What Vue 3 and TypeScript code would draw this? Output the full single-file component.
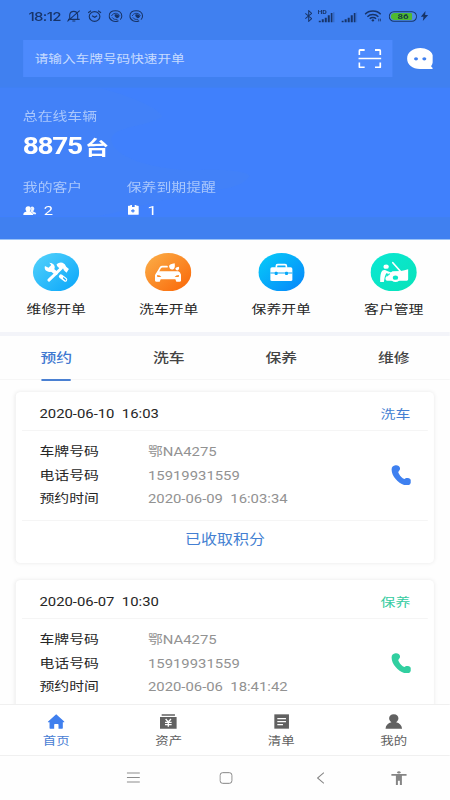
<script setup lang="ts">
interface Booking {
  created: string
  kind: string
  tone: 'blue' | 'green'
  plate: string
  phone: string
  time: string
  footer?: string
}

const shortcuts = [
  { id: 'repair', label: '维修开单' },
  { id: 'wash', label: '洗车开单' },
  { id: 'care', label: '保养开单' },
  { id: 'client', label: '客户管理' },
]

const tabs = ['预约', '洗车', '保养', '维修']

const bookings: Booking[] = [
  {
    created: '2020-06-10  16:03', kind: '洗车', tone: 'blue', plate: '鄂NA4275',
    phone: '15919931559', time: '2020-06-09  16:03:34', footer: '已收取积分',
  },
  {
    created: '2020-06-07  10:30', kind: '保养', tone: 'green', plate: '鄂NA4275',
    phone: '15919931559', time: '2020-06-06  18:41:42',
  },
]

const navItems = [
  { id: 'home', label: '首页' },
  { id: 'asset', label: '资产' },
  { id: 'orders', label: '清单' },
  { id: 'mine', label: '我的' },
]
</script>

<template>
  <div class="screen">
    <header class="hero">
      <svg class="hero-art" viewBox="0 0 450 240" preserveAspectRatio="none" aria-hidden="true">
        <rect y="88" width="450" height="130" fill="#4080fc" />
        <path d="M0 88H98C130 96 158 108 162 117C150 127 113 126 111 140C113 158 150 169 190 171C230 169 248 173 249 177C242 187 225 191 205 191C160 199 130 212 97 217H0Z" fill="#4381f7" opacity=".75" />
      </svg>
      <div class="status">
        <span class="clock">18:12</span>
        <div class="status-left">
          <svg width="11.2" height="12" viewBox="0 0 41 36" preserveAspectRatio="none" fill="none" stroke="#173469" stroke-width="3.4">
            <path d="M8 27V15C9 7 15 4 20 4s11 3 12 11v12M3 28h35M16 33h9M1 34L38 2" />
          </svg>
          <svg width="11.2" height="12" viewBox="0 0 41 36" preserveAspectRatio="none" fill="none" stroke="#173469" stroke-width="3.4">
            <ellipse cx="20.500" cy="19.500" rx="16" ry="14.500" /><path d="M1 8l9-6M40 8l-9-6M13 17l8 5 7-5" />
          </svg>
          <svg v-for="n in 2" :key="n" width="11.5" height="12" viewBox="0 0 42 36" preserveAspectRatio="none" fill="none" stroke="#173469" stroke-width="3.2">
            <path d="M30 32C18 38 2 31 2 18S12 2 21 2s19 5 19 16c0 5-2 9-5 11" />
            <path d="M9 18c4-9 17-12 25-1M11 22c3 6 9 7 16 6" stroke-width="2.600" /><path d="M18 14c5-3 12-1 15 5l-4 5c-6 0-11-3-11-10z" fill="#173469" stroke="none" />
          </svg>
        </div>
        <div class="status-right">
          <svg width="6.600" height="12" viewBox="0 0 24 36" preserveAspectRatio="none" fill="none" stroke="#173469" stroke-width="3">
            <path d="M2 10l19 16-9 8V2l9 8L2 26" />
          </svg>
          <svg class="g1" width="13.700" height="13" viewBox="0 0 50 39" preserveAspectRatio="none" fill="#173469">
            <text x="-2" y="13" font-size="17" font-weight="700" textLength="28" lengthAdjust="spacingAndGlyphs">HD</text>
            <path d="M2 32h6v5H2zM11 28h6v9h-6zM20 23h6v14h-6zM29 16h6v21h-6zM38 9h5v28h-5z" /><path d="M45 7h4v30h-4z" opacity=".3" />
          </svg>
          <svg class="g2" width="13.900" height="13" viewBox="0 0 50 39" preserveAspectRatio="none" fill="#173469">
            <path d="M1 32h6v5H1zM10 28h6v9h-6zM19 23h6v14h-6zM28 16h6v21h-6zM37 9h5v28h-5z" /><path d="M45 7h4v30h-4z" opacity=".3" />
          </svg>
          <svg class="g3" width="14.200" height="12" viewBox="0 0 52 36" preserveAspectRatio="none" fill="none" stroke="#173469" stroke-width="4.500">
            <path d="M2 13C14 0 37 0 49 13M9 20c9-9 24-9 33 0M16 26c5-5 14-5 19 0" /><circle cx="25.500" cy="31" r="3.500" fill="#173469" stroke="none" /><path d="M43 26v8m5-8v8" stroke-width="2.500" />
          </svg>
          <svg class="g3" width="23.200" height="11" viewBox="0 0 85 33" preserveAspectRatio="none">
            <rect x="1.500" y="2" width="82" height="29" rx="14" fill="#4c8bea" stroke="#173469" stroke-width="3.200" />
            <path d="M16 6H67a8 8 0 0 1 3 2V25a8 8 0 0 1-3 2H16C3 26 3 7 16 6z" fill="#4fba31" />
            <text x="26" y="25" font-size="24" font-weight="700" fill="#153d42" textLength="34" lengthAdjust="spacingAndGlyphs">86</text>
          </svg>
          <svg class="g4" width="6.600" height="10" viewBox="0 0 24 30" preserveAspectRatio="none" fill="#173469">
            <path d="M15 0L1 17h8L7 30 23 12h-9z" />
          </svg>
        </div>
      </div>

      <div class="search-row">
        <div class="search">
          <span>请输入车牌号码快速开单</span>
          <svg width="18.900" height="19.500" viewBox="0 0 69 58" preserveAspectRatio="none" fill="none" stroke="#fff" stroke-width="5.500">
            <path d="M2.800 18V6q0-3 3-3H19M50 3h13q3 0 3 3v12M2.800 40v12q0 3 3 3H19M50 55h13q3 0 3-3V40" /><path d="M0 28.500h69" stroke-width="4.500" />
          </svg>
        </div>
        <svg class="chat" width="21.800" height="21" viewBox="0 0 80 62" preserveAspectRatio="none">
          <path d="M40 0C18 0 0 13 0 31s16 31 39 31h37q4-2 1-4c-5-2-5-4-3-7 4-6 6-12 6-20C80 13 62 0 40 0z" fill="#fff" /><ellipse cx="27" cy="32" rx="6" ry="5" fill="#4080ef" /><ellipse cx="52" cy="32" rx="6" ry="5" fill="#4080ef" />
        </svg>
      </div>

      <div class="total-label">总在线车辆</div>
      <div class="total"><span class="digits">8875</span><span>台</span></div>
      <div class="stats">
        <div class="stat">
          <div class="stat-label">我的客户</div>
          <div class="stat-value">
            <svg width="10.900" height="9" viewBox="0 0 40 28" preserveAspectRatio="none" fill="#fff">
              <path d="M23 3q5-3 9 1c4 5 0 10-2 13l8 4q2 2 1 5H30l-2-5-7-4c3-4 5-9 2-14z" opacity=".9" /><path d="M15 1c7 0 9 5 8 9-1 3-3 5-3 7l7 4q3 2 3 7H0q0-6 3-8l7-3c0-2-3-4-3-8s3-8 8-8z" />
            </svg>
            <span>2</span>
          </div>
        </div>
        <div class="stat">
          <div class="stat-label">保养到期提醒</div>
          <div class="stat-value due">
            <svg width="8.800" height="9.800" viewBox="0 0 32 30" preserveAspectRatio="none">
              <path d="M2 2h5V0h5v3h8V0h5v2h5q2 0 2 2v24q0 2-2 2H2q-2 0-2-2V4q0-2 2-2z" fill="#fff" /><path d="M12 3h8v3h-8zM9 16h4v-3h4v3h3v4h-3v3h-4v-3H9z" fill="#4080f5" />
            </svg>
            <span>1</span>
          </div>
        </div>
      </div>
    </header>

    <section class="shortcuts">
      <div v-for="s in shortcuts" :key="s.id" class="shortcut">
        <svg width="38" height="38.400" viewBox="0 0 139 115" preserveAspectRatio="none">
          <defs>
            <linearGradient id="g-repair" x1="0" y1="0" x2="1" y2="1"><stop stop-color="#55d3fb" /><stop offset="1" stop-color="#08a5fa" /></linearGradient>
            <linearGradient id="g-wash" x1="0" y1="0" x2="1" y2="1"><stop stop-color="#fbb04a" /><stop offset="1" stop-color="#fa6506" /></linearGradient>
            <linearGradient id="g-care" x1="0" y1="0" x2="1" y2="1"><stop stop-color="#06cdf8" /><stop offset="1" stop-color="#0784fb" /></linearGradient>
            <linearGradient id="g-client" x1="0" y1="0" x2="1" y2="1"><stop stop-color="#0ae8d4" /><stop offset="1" stop-color="#08e3b9" /></linearGradient>
          </defs>
          <ellipse cx="69.500" cy="57.500" rx="69.500" ry="57.500" :fill="`url(#g-${s.id})`" />
          <g v-if="s.id === 'repair'" fill="none" stroke="#fff">
            <path d="M57 50L69 60M84 70L97 80" stroke-width="12" stroke-linecap="round" />
            <path d="M49 29l6 7-8 8-11-5q-3 11 7 16 9 4 18-2 8-9 2-18-5-6-14-6z" fill="#fff" stroke="none" />
            <path d="M86 45L48 81" stroke-width="9" stroke-linecap="round" />
            <path d="M71 34q8-8 18-5 8 3 11 12l8 7-7 11-8-7-3-7q-5-2-9 2l-8-7z" fill="#fff" stroke="none" />
            <path d="M92 75l6 5" stroke="#18acf9" stroke-width="4" stroke-linecap="round" />
          </g>
          <g v-else-if="s.id === 'wash'">
            <path d="M38 58l8-14q2-3 6-3h14" fill="none" stroke="#fff" stroke-width="5" stroke-linecap="round" />
            <path d="M72 39q2-6 17-8 2 15-4 18-11 3-13-10zM91 46q3-5 11-5 2 9-3 11-8 2-8-6z" fill="#fff" />
            <path d="M39 55h61q6 3 8 10v18q-1 3-4 3H94l-3-7H47l-3 7H34q-3 0-4-3V66q3-8 9-11z" fill="#fff" />
            <path d="M36 66q10 0 13 6H37zM102 66q-10 0-13 6h12z" fill="#fb8b24" />
          </g>
          <g v-else-if="s.id === 'care'">
            <path d="M54 44v-5q0-4 4-4h22q4 0 4 4v5" fill="none" stroke="#fff" stroke-width="5" />
            <path d="M41 43h56q5 0 5 5v33q0 3-5 3H41q-5 0-5-3V48q0-5 5-5z" fill="#fff" />
            <path d="M36 60h66" stroke="#07a9f9" stroke-width="3" /><rect x="49" y="56" width="9" height="10" rx="3" fill="#07a9f9" /><rect x="80" y="56" width="9" height="10" rx="3" fill="#07a9f9" />
          </g>
          <g v-else>
            <ellipse cx="47" cy="41" rx="8" ry="6.500" fill="#fff" />
            <path d="M29 87q-1-25 6-34 7-5 15 1l16 6-1 5-18-4-4 10-3 16z" fill="#fff" />
            <path d="M67 29l22 25" stroke="#fff" stroke-width="5" stroke-linecap="round" />
            <path d="M48 68l18-13 25-1q11-2 22-5v30q0 4-4 4H49q-8-4-1-15z" fill="#fff" />
            <ellipse cx="75" cy="74" rx="15" ry="13" fill="#fff" /><ellipse cx="75" cy="74" rx="8" ry="6.500" fill="#09e6c8" /><path d="M48 70l10-8" stroke="#09e6c8" stroke-width="3" />
          </g>
        </svg>
        <span>{{ s.label }}</span>
      </div>
    </section>

    <nav class="tabs">
      <div v-for="(t, i) in tabs" :key="t" class="tab" :class="{ active: i === 0 }"><span>{{ t }}</span></div>
    </nav>

    <main class="list">
      <article v-for="b in bookings" :key="b.created" class="card" :class="b.tone">
        <div class="card-head"><span>{{ b.created }}</span><span class="kind">{{ b.kind }}</span></div>
        <div class="card-body">
          <dl>
            <dt>车牌号码</dt><dd>{{ b.plate }}</dd>
            <dt>电话号码</dt><dd>{{ b.phone }}</dd>
            <dt>预约时间</dt><dd>{{ b.time }}</dd>
          </dl>
          <svg class="call" width="16.700" height="20.700" viewBox="0 0 62 62" preserveAspectRatio="none">
            <path d="M13 1c6-1 13 2 14 9 0 5-3 8-5 10-1 2 0 4 2 7 4 7 9 12 16 15 3-2 6-4 11-3 7 1 11 6 10 11-1 8-9 12-17 11C24 58 2 35 1 15 0 7 6 2 13 1z" fill="currentColor" />
          </svg>
        </div>
        <div v-if="b.footer" class="card-foot">{{ b.footer }}</div>
      </article>
    </main>

    <nav class="bottom">
      <div v-for="n in navItems" :key="n.id" class="nav-item" :class="n.id">
        <svg width="14.200" height="15" viewBox="0 0 52 45" preserveAspectRatio="none" fill="currentColor">
          <path v-if="n.id === 'home'" d="M26 1l25 22q1 2-1 2h-4v17q0 2-2 2H33V32q0-2-2-2H22q-2 0-2 2v12H8q-2 0-2-2V25H2q-2 0-1-2z" />
          <template v-else-if="n.id === 'asset'">
            <path d="M6 1h40v4H6zM1 9h50v35H1z" /><path d="M18 15l8 9 8-9M16 25h20M16 32h20M26 24v14" fill="none" stroke="#fff" stroke-width="4" />
          </template>
          <template v-else-if="n.id === 'orders'">
            <path d="M4 1h44v43H4z" /><path d="M13 14h26M13 23h26M13 32h17" stroke="#fff" stroke-width="3.500" />
          </template>
          <path v-else d="M26 1c9 0 14 6 14 12 0 5-3 9-7 12 10 2 17 9 18 19H1c1-10 8-17 18-19-4-3-7-7-7-12C12 7 17 1 26 1z" />
        </svg>
        <span>{{ n.label }}</span>
      </div>
    </nav>

    <footer class="system">
      <svg width="10.700" height="11" viewBox="0 0 39 33" preserveAspectRatio="none" fill="none" stroke="#8b8b8b" stroke-width="3"><path d="M0 3h39M0 16.500h39M0 30h39" /></svg>
      <svg class="sys-home" width="10.900" height="12" viewBox="0 0 40 36" preserveAspectRatio="none" fill="none" stroke="#858585" stroke-width="3"><rect x="2" y="2" width="36" height="32" rx="8" /></svg>
      <svg class="sys-back" width="6.300" height="12" viewBox="0 0 23 36" preserveAspectRatio="none" fill="none" stroke="#858585" stroke-width="3"><path d="M21 2L2 18l19 16" /></svg>
      <svg class="sys-access" width="12.600" height="14" viewBox="0 0 46 42" preserveAspectRatio="none" fill="#858585"><ellipse cx="23" cy="4" rx="5" ry="3.500" /><path d="M0 9h46v5H32v28h-6V29h-6v13h-6V14H0z" /></svg>
    </footer>
  </div>
</template>

<style>
body {
  overflow: hidden;
  background: #fff;
}
</style>

<style scoped>
/* The layout is drawn in narrow phone units and widened to fill the window. */
.screen {
  display: flex;
  flex-direction: column;
  width: 369.23px;
  height: 800px;
  transform: scaleX(1.21875);
  transform-origin: 0 0;
  background: #fefefe;
  color: #262626;
  font-family: Roboto, "Noto Sans CJK SC", sans-serif;
  font-size: 12.2px;
}
svg {
  display: block;
  flex: none;
}
.hero {
  position: relative;
  flex: none;
  box-sizing: border-box;
  width: 370px;
  height: 240px;
  background: #4080f0;
  border-bottom: 1px solid #9bc3f7;
  color: #fff;
}
.hero-art {
  position: absolute;
  left: 0;
  top: 0;
  width: 100%;
  height: 100%;
}
.hero > div {
  position: relative;
}
.status {
  display: flex;
  align-items: center;
  height: 32px;
  padding: 0 18.2px 0 23.3px;
  color: #173469;
}
.clock {
  width: 32.2px;
  font-size: 12.3px;
  font-weight: 500;
  letter-spacing: -0.5px;
  font-family: Inter, Roboto, sans-serif;
}
.status-left {
  display: flex;
  gap: 5.7px;
}
.status-right {
  display: flex;
  align-items: center;
  margin-left: auto;
}
.g1 { margin-left: 4.9px; }
.g2 { margin-left: 4.6px; }
.g3 { margin-left: 5.5px; }
.g4 { margin-left: 3.4px; }
.search-row {
  display: flex;
  align-items: center;
  height: 37px;
  margin-top: 8px;
  padding: 0 14.7px 0 18.9px;
}
.search {
  display: flex;
  align-items: center;
  justify-content: space-between;
  width: 302.800px;
  height: 37px;
  box-sizing: border-box;
  padding: 0 9px 0 9.6px;
  background: #4d8afd;
  color: #c6dbff;
  font-size: 11.2px;
}
.search span {
  margin-top: -1px;
}
.chat {
  margin-left: auto;
  margin-top: -1px;
}
.total-label {
  margin: 30px 0 0 18.700px;
  height: 20px;
  line-height: 20px;
  color: #a9c7fc;
}
.total {
  display: flex;
  align-items: center;
  height: 38px;
  padding-left: 18.700px;
  font-size: 19.800px;
  font-weight: 700;
}
.digits {
  margin: 1px 2.600px 0 0;
  font-size: 23px;
  letter-spacing: -1.100px;
}
.stats {
  display: flex;
  margin-top: 13px;
  padding-left: 18.700px;
}
.stat {
  width: 85.300px;
  white-space: nowrap;
}
.stat-label {
  height: 20px;
  line-height: 20px;
  color: #a9c7fc;
}
.stat-value {
  display: flex;
  align-items: center;
  height: 24px;
  gap: 5.500px;
  padding-left: 0.800px;
  font-size: 13.500px;
}
.due {
  gap: 7px;
  padding-left: 1.200px;
}
.shortcuts {
  display: flex;
  flex: none;
  height: 92px;
  border-bottom: 4px solid #f3f4f9;
}
.shortcut {
  flex: 1;
  display: flex;
  flex-direction: column;
  align-items: center;
  padding-top: 13px;
}
.shortcut span {
  margin-top: 9px;
  line-height: 20px;
}
.tabs {
  display: flex;
  flex: none;
  height: 43px;
  border-bottom: 1px solid #f6f6f6;
}
.tab {
  flex: 1;
  display: flex;
  justify-content: center;
  height: 45px;
  font-size: 13px;
  font-weight: 500;
  line-height: 43px;
  color: #444;
}
.tab span {
  box-sizing: border-box;
  width: 26px;
  height: 45px;
  text-align: center;
}
.active span {
  display: flex;
  justify-content: center;
  width: 24px;
  white-space: nowrap;
  color: #3f78d0;
  border-bottom: 2px solid #4a80d2;
}
.list {
  flex: 1;
  min-height: 0;
  overflow: hidden;
  padding: 12px 13.300px 0;
}
.card {
  height: 171px;
  margin-bottom: 17px;
  padding: 0 4.800px;
  border-radius: 4px;
  background: #fff;
  box-shadow: 0 0 4px 0 #e9e9e9;
}
.blue { --tone: #3e80f0; --kind: #447fd2; }
.green { --tone: #31cfa0; --kind: #36cba1; }
.card-head {
  display: flex;
  align-items: center;
  justify-content: space-between;
  height: 39px;
  box-sizing: border-box;
  padding: 5px 14.500px 0 14.300px;
  border-bottom: 1px solid #f5f5f5;
  white-space: pre;
}
.kind {
  color: var(--kind);
}
.card-body {
  display: flex;
  align-items: center;
  justify-content: space-between;
  height: 89px;
  padding: 0 13.700px 0 14.300px;
  border-bottom: 1px solid #f5f5f5;
}
dl {
  display: grid;
  grid-template-columns: 89px auto;
  grid-auto-rows: 23.500px;
  margin: 2px 0 0;
  line-height: 23.500px;
}
dd {
  margin: 0;
  color: #929292;
  white-space: pre;
}
.call {
  margin-top: -1px;
  color: var(--tone);
}
.card-foot {
  height: 38px;
  line-height: 38px;
  text-align: center;
  font-size: 13.100px;
  color: #447fd2;
}
.bottom {
  display: flex;
  flex: none;
  height: 50px;
  border-top: 1px solid #f0f0f0;
  border-bottom: 1px solid #f0f0f0;
  background: #fff;
}
.nav-item {
  flex: 1;
  display: flex;
  flex-direction: column;
  align-items: center;
  padding-top: 9px;
  color: #616161;
  font-size: 11px;
}
.nav-item span {
  margin-top: 3px;
  line-height: 20px;
}
.home {
  color: #3f7fee;
}
.home span {
  color: #4980d4;
}
.system {
  display: flex;
  flex: none;
  align-items: center;
  height: 44px;
  box-sizing: border-box;
  padding: 0 0 1px 104.200px;
}
.sys-home { margin-left: 65.200px; }
.sys-back { margin-left: 68.900px; }
.sys-access { margin-left: 55.300px; }
</style>
